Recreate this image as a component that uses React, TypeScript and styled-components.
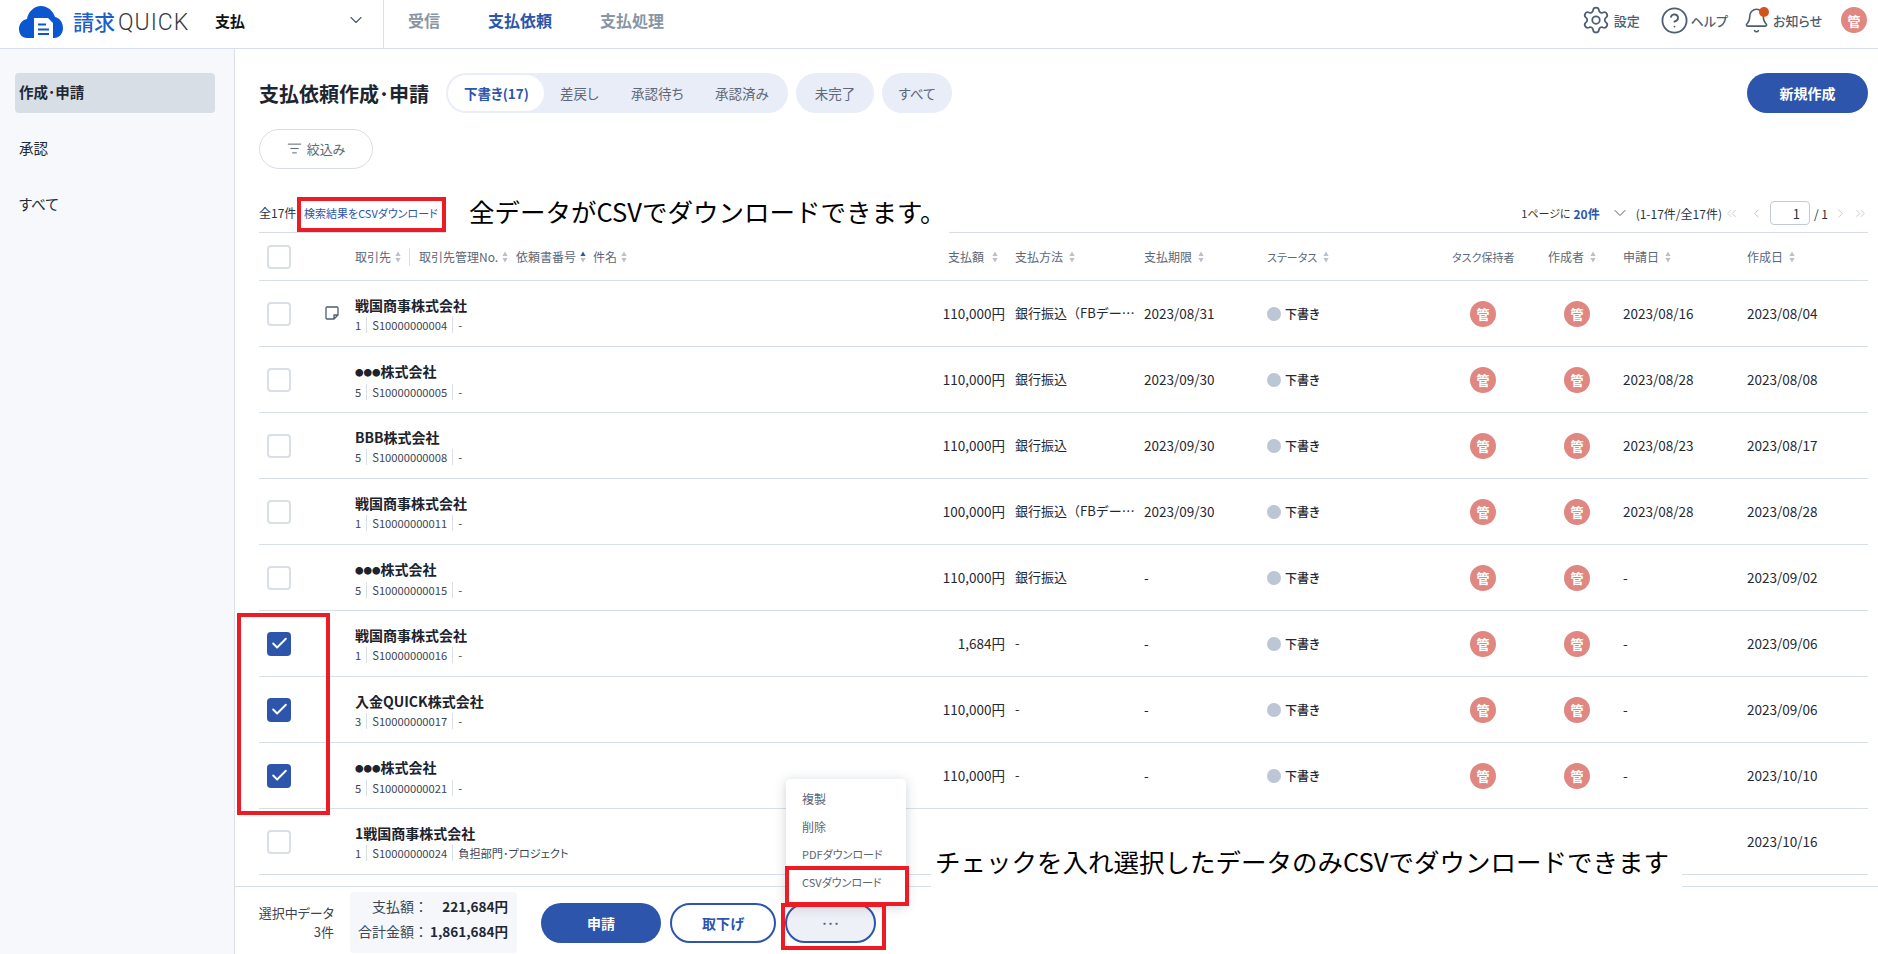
import React from "react";
import styled, { createGlobalStyle } from "styled-components";
import { Settings, CircleHelp, Bell, ChevronDown, ChevronLeft, ChevronRight, ChevronsLeft, ChevronsRight, Check, ListFilter } from "lucide-react";

const Global = createGlobalStyle`
  html, body { margin: 0; padding: 0; background: #fff; }
  body {
    font-family: "Noto Sans CJK JP", "Noto Sans", sans-serif;
    font-feature-settings: "palt";
    color: #1f2833;
  }
  * { box-sizing: border-box; }
`;

const BLUE = "#2c55ab";
const GRID = "66px 30px 590px 60px 139px 123px 185px 96px 75px 124px 121px";

const Page = styled.div`
  position: relative;
  width: 1878px;
  height: 954px;
  overflow: hidden;
  display: flex;
  flex-direction: column;
`;

/* ---------- top bar ---------- */
const TopBar = styled.header`
  height: 49px;
  flex: none;
  display: flex;
  align-items: stretch;
  border-bottom: 1px solid #d8dfeb;
`;
const LogoArea = styled.div`
  width: 215px;
  padding: 0 0 4px 19px;
  display: flex;
  align-items: center;
`;
const LogoKanji = styled.span`
  margin: 0 0 2px 10px;
  font-size: 21px;
  font-weight: 500;
  color: #1c5fc8;
  line-height: 1;
`;
const LogoLatin = styled.span`
  margin-left: 3px;
  font-family: Roboto, sans-serif;
  font-weight: 300;
  font-size: 23px;
  letter-spacing: 1px;
  color: #333a42;
  line-height: 1;
`;
const Selector = styled.div`
  width: 169px;
  padding: 0 17px 8px 0;
  display: flex;
  align-items: center;
  justify-content: space-between;
  font-size: 15px;
  font-weight: 700;
  color: #111;
  border-right: 1px solid #d8dfeb;
`;
const TopNav = styled.nav`
  display: flex;
  align-items: center;
  gap: 48px;
  padding: 0 0 8px 24px;
  flex: 1;
`;
const TopNavItem = styled.span<{ $active?: boolean }>`
  font-size: 16px;
  font-weight: 700;
  color: ${(p) => (p.$active ? BLUE : "#8a95a3")};
`;
const TopActions = styled.div`
  display: flex;
  align-items: center;
  padding: 0 11px 8px 0;
`;
const TopAction = styled.div<{ $gap: number; $icon: number }>`
  display: flex;
  align-items: center;
  gap: ${(p) => p.$icon}px;
  margin-right: ${(p) => p.$gap}px;
  font-size: 13px;
  font-weight: 500;
  color: #4e5d70;
`;
const BellWrap = styled.span`
  position: relative;
  display: flex;
`;
const BellDot = styled.span`
  position: absolute;
  top: 0;
  right: 1px;
  width: 10px;
  height: 10px;
  border-radius: 50%;
  background: #d4531b;
`;
const Avatar = styled.span`
  width: 26px;
  height: 26px;
  border-radius: 50%;
  background: #df8780;
  color: #fff;
  font-size: 13px;
  font-weight: 700;
  display: inline-flex;
  align-items: center;
  justify-content: center;
`;

/* ---------- body ---------- */
const Body = styled.div`
  flex: 1;
  display: flex;
  min-height: 0;
`;
const Sidebar = styled.aside`
  width: 235px;
  flex: none;
  background: #f6f8fc;
  border-right: 1px solid #d8dfeb;
  padding: 24px 19px 0 15px;
  display: flex;
  flex-direction: column;
  gap: 16px;
`;
const SideItem = styled.div<{ $active?: boolean }>`
  height: 40px;
  padding: 0 0 3px 4px;
  display: flex;
  align-items: center;
  font-size: 14.5px;
  font-weight: ${(p) => (p.$active ? 700 : 400)};
  border-radius: 4px;
  background: ${(p) => (p.$active ? "#d8dee6" : "transparent")};
`;
const Main = styled.main`
  flex: 1;
  display: flex;
  flex-direction: column;
  min-width: 0;
`;
const Content = styled.div`
  flex: 1;
  padding: 24px 10px 0 24px;
  min-height: 0;
`;
const HeadRow = styled.div`
  display: flex;
  align-items: center;
  height: 40px;
`;
const Title = styled.h1`
  margin: 0 16px 0 0;
  width: 171px;
  font-size: 20px;
  font-weight: 700;
  white-space: nowrap;
  color: #1c2530;
`;
const TabGroup = styled.div`
  display: flex;
  align-items: center;
  height: 40px;
  padding: 2px 0 2px 2px;
  border-radius: 20px;
  background: #e9edf7;
`;
const Tab = styled.div<{ $active?: boolean; $w: number }>`
  width: ${(p) => p.$w}px;
  height: 36px;
  display: flex;
  align-items: center;
  padding-left: 16px;
  border-radius: 18px;
  font-size: 13.5px;
  font-weight: ${(p) => (p.$active ? 700 : 400)};
  color: ${(p) => (p.$active ? BLUE : "#5d6878")};
  background: ${(p) => (p.$active ? "#fff" : "transparent")};
  white-space: nowrap;
`;
const PillTab = styled.div<{ $w: number }>`
  width: ${(p) => p.$w}px;
  height: 40px;
  margin-left: 8px;
  border-radius: 20px;
  background: #e9edf7;
  color: #5d6878;
  font-size: 13.5px;
  display: flex;
  align-items: center;
  justify-content: center;
`;
const PrimaryButton = styled.button<{ $w: number }>`
  width: ${(p) => p.$w}px;
  height: 40px;
  border: none;
  border-radius: 20px;
  background: ${BLUE};
  color: #fff;
  font: inherit;
  font-size: 14px;
  font-weight: 700;
`;
const Spacer = styled.div`
  flex: 1;
`;
const FilterButton = styled.button`
  margin-top: 16px;
  width: 114px;
  height: 40px;
  padding: 0 0 2px;
  border: 1px solid #d8dde6;
  border-radius: 20px;
  background: #fff;
  color: #5d6878;
  font: inherit;
  font-size: 13px;
  display: flex;
  align-items: center;
  justify-content: center;
  gap: 5px;
`;
const Toolbar = styled.div`
  height: 64px;
  padding-top: 32px;
  border-bottom: 1px solid #d9dee6;
  display: flex;
  align-items: flex-start;
  font-size: 12px;
`;
const Count = styled.span`
  width: 45px;
  line-height: 24px;
  color: #2b3440;
`;
const DownloadLink = styled.span`
  line-height: 24px;
  font-size: 11px;
  color: ${BLUE};
`;
const Pager = styled.div`
  display: flex;
  align-items: center;
  height: 24px;
  color: #2b3440;
`;
const PerPageLabel = styled.span`
  font-size: 11px;
`;
const PerPageValue = styled.span`
  margin-left: 3px;
  font-weight: 700;
  color: ${BLUE};
`;
const PagerGap = styled.span<{ $w: number }>`
  display: inline-flex;
  margin-left: ${(p) => p.$w}px;
  color: inherit;
`;
const PageInput = styled.span`
  width: 40px;
  height: 24px;
  margin-left: 6px;
  padding-right: 9px;
  border: 1px solid #c3cad6;
  border-radius: 4px;
  display: flex;
  align-items: center;
  justify-content: flex-end;
  font-size: 13px;
`;

/* ---------- table ---------- */
const Row = styled.div<{ $h: number }>`
  height: ${(p) => p.$h}px;
  display: grid;
  grid-template-columns: ${GRID};
  align-items: center;
  border-bottom: 1px solid #d9dfe8;
  font-size: 13.5px;
`;
const CheckCell = styled.div`
  padding-left: 8px;
  display: flex;
`;
const Box = styled.span<{ $on?: boolean }>`
  width: 24px;
  height: 24px;
  border-radius: 4px;
  border: 2px solid ${(p) => (p.$on ? BLUE : "#dadfe7")};
  background: ${(p) => (p.$on ? BLUE : "#fff")};
  color: #fff;
  display: inline-flex;
  align-items: center;
  justify-content: center;
`;
const HeadNames = styled.div`
  display: flex;
  align-items: center;
`;
const HeadLabel = styled.span<{ $w?: number; $sep?: boolean; $pl?: number; $gap?: number; $size?: number }>`
  width: ${(p) => (p.$w ? `${p.$w}px` : "auto")};
  padding-left: ${(p) => p.$pl ?? 0}px;
  height: 18px;
  display: inline-flex;
  align-items: center;
  gap: ${(p) => p.$gap ?? 6}px;
  font-size: ${(p) => p.$size ?? 12}px;
  color: #5c6878;
  white-space: nowrap;
  border-right: ${(p) => (p.$sep ? "1px solid #d9dfe8" : "none")};
`;
const NameBlock = styled.div`
  display: flex;
  flex-direction: column;
  gap: 2px;
  padding-top: 1px;
`;
const CompanyName = styled.div`
  font-size: 14px;
  font-weight: 700;
  line-height: 20px;
  color: #1b232d;
`;
const NameDots = styled.span`
  font-size: 8.5px;
  vertical-align: 1px;
`;
const SubLine = styled.div`
  display: flex;
  align-items: center;
  height: 16px;
  font-size: 11.2px;
  color: #3c4653;
`;
const SubPart = styled.span<{ $sep?: boolean }>`
  height: 16px;
  line-height: 16px;
  padding: 0 5px;
  border-right: ${(p) => (p.$sep ? "1px solid #d9dfe8" : "none")};
  &:first-child { padding-left: 0; }
`;
const Amount = styled.div`
  display: flex;
  justify-content: flex-end;
  padding-bottom: 2px;
  white-space: nowrap;
`;
const Method = styled.div`
  padding: 0 9px 2px 10px;
  font-size: 13px;
  white-space: nowrap;
  overflow: hidden;
  text-overflow: ellipsis;
  font-feature-settings: normal;
`;
const DateCell = styled.div`
  padding-bottom: 2px;
`;
const Status = styled.div`
  display: flex;
  align-items: center;
  gap: 4px;
  font-size: 12px;
  font-weight: 500;
`;
const Dot = styled.span`
  width: 14px;
  height: 14px;
  border-radius: 50%;
  background: #bdc6d4;
`;
const AvatarCell = styled.div<{ $pl: number }>`
  padding-left: ${(p) => p.$pl}px;
  display: flex;
`;

/* ---------- footer ---------- */
const Footer = styled.footer`
  height: 68px;
  flex: none;
  padding: 5px 0 0 23px;
  border-top: 1px solid #d9dfe8;
  display: flex;
  align-items: flex-start;
`;
const SelectedLabel = styled.div`
  width: 76px;
  margin-top: 11px;
  text-align: right;
  font-size: 13px;
  line-height: 19px;
  color: #3c4653;
  white-space: nowrap;
`;
const Summary = styled.div`
  width: 167px;
  height: 61px;
  margin: 0 24px 0 16px;
  padding: 1px 9px 0 0;
  border-radius: 4px;
  background: #f5f7fb;
  display: grid;
  grid-template-columns: 78px 80px;
  grid-auto-rows: 25px;
  align-items: center;
  font-size: 13.5px;
`;
const SummaryKey = styled.span`
  text-align: right;
  color: #3c4653;
  white-space: nowrap;
  font-size: 14px;
  font-feature-settings: normal;
`;
const SummaryValue = styled.span`
  text-align: right;
  font-weight: 700;
  white-space: nowrap;
`;
const ButtonRow = styled.div`
  display: flex;
  gap: 9px;
  margin-top: 11px;
`;
const OutlineButton = styled.button<{ $w: number; $tinted?: boolean }>`
  width: ${(p) => p.$w}px;
  height: 40px;
  padding: 0;
  border: 2px solid ${BLUE};
  border-radius: 20px;
  background: ${(p) => (p.$tinted ? "#edf0f6" : "#fff")};
  color: ${(p) => (p.$tinted ? "#5d6878" : BLUE)};
  font: inherit;
  font-size: ${(p) => (p.$tinted ? 12 : 14)}px;
  font-weight: 700;
`;

/* ---------- overlays: dropdown and the annotations on the screenshot ---------- */
const Menu = styled.div`
  position: absolute;
  left: 786px;
  top: 779px;
  width: 120px;
  height: 126px;
  padding-top: 5px;
  border-radius: 4px;
  background: #fff;
  box-shadow: 0 2px 12px rgba(60, 75, 100, 0.25);
  z-index: 3;
`;
const MenuItem = styled.div<{ $size?: number }>`
  height: 28px;
  padding-left: 16px;
  display: flex;
  align-items: center;
  font-size: ${(p) => p.$size ?? 12}px;
  color: #5a6472;
`;
const Note = styled.div<{ $x: number; $y: number; $w: number; $h: number; $pl: number; $pb: number }>`
  position: absolute;
  left: ${(p) => p.$x}px;
  top: ${(p) => p.$y}px;
  width: ${(p) => p.$w}px;
  height: ${(p) => p.$h}px;
  padding: 0 0 ${(p) => p.$pb}px ${(p) => p.$pl}px;
  background: #fff;
  display: flex;
  align-items: center;
  font-size: 25.5px;
  font-feature-settings: normal;
  color: #000;
  white-space: nowrap;
  z-index: 2;
`;
const RedBox = styled.div<{ $x: number; $y: number; $w: number; $h: number }>`
  position: absolute;
  left: ${(p) => p.$x}px;
  top: ${(p) => p.$y}px;
  width: ${(p) => p.$w}px;
  height: ${(p) => p.$h}px;
  border: 4px solid #ed1c24;
  z-index: 4;
`;

/* ---------- drawings ---------- */
const LogoMark = () => (
  <svg width="44" height="32" viewBox="0 0 44 32" aria-hidden="true">
    <path d="M8 32C3 32 0 28 0 23C0 18 3 14 8 13C9 6 15 0 22 0C29 0 34 5 36 11C41 12 44 17 44 22C44 28 40 32 35 32Z" fill="#0b57cf" />
    <path d="M15 12H29L34 17V32H15Z" fill="#fff" />
    <rect x="19" y="17.5" width="8" height="2" fill="#0b57cf" />
    <rect x="19" y="22.5" width="11" height="2" fill="#0b57cf" />
    <rect x="19" y="27" width="11" height="2" fill="#0b57cf" />
  </svg>
);
const Sort = ({ active }: { active?: boolean }) => (
  <svg width="6" height="12" viewBox="0 0 6 12" aria-hidden="true">
    <path d="M3 0.5L5.6 5H0.4Z" fill={active ? BLUE : "#b8c0cc"} />
    <path d="M3 11.5L5.6 7H0.4Z" fill="#b8c0cc" />
  </svg>
);
const NoteIcon = () => (
  <svg width="14" height="14" viewBox="0 0 14 14" aria-hidden="true">
    <path d="M2 1H12Q13 1 13 2V9L9 13H2Q1 13 1 12V2Q1 1 2 1ZM13 9H9V13" fill="none" stroke="#4e5d70" strokeWidth="1.3" strokeLinejoin="round" />
  </svg>
);

type RowData = {
  name: string; no: string; code: string; sub: string; amount: string; method: string;
  due: string; applied: string; created: string; checked?: boolean; note?: boolean;
};
const FB = "銀行振込（FBデータ）";
const rows: RowData[] = [
  { name: "戦国商事株式会社", no: "1", code: "S10000000004", sub: "-", amount: "110,000円", method: FB, due: "2023/08/31", applied: "2023/08/16", created: "2023/08/04", note: true },
  { name: "●●●株式会社", no: "5", code: "S10000000005", sub: "-", amount: "110,000円", method: "銀行振込", due: "2023/09/30", applied: "2023/08/28", created: "2023/08/08" },
  { name: "BBB株式会社", no: "5", code: "S10000000008", sub: "-", amount: "110,000円", method: "銀行振込", due: "2023/09/30", applied: "2023/08/23", created: "2023/08/17" },
  { name: "戦国商事株式会社", no: "1", code: "S10000000011", sub: "-", amount: "100,000円", method: FB, due: "2023/09/30", applied: "2023/08/28", created: "2023/08/28" },
  { name: "●●●株式会社", no: "5", code: "S10000000015", sub: "-", amount: "110,000円", method: "銀行振込", due: "-", applied: "-", created: "2023/09/02" },
  { name: "戦国商事株式会社", no: "1", code: "S10000000016", sub: "-", amount: "1,684円", method: "-", due: "-", applied: "-", created: "2023/09/06", checked: true },
  { name: "入金QUICK株式会社", no: "3", code: "S10000000017", sub: "-", amount: "110,000円", method: "-", due: "-", applied: "-", created: "2023/09/06", checked: true },
  { name: "●●●株式会社", no: "5", code: "S10000000021", sub: "-", amount: "110,000円", method: "-", due: "-", applied: "-", created: "2023/10/10", checked: true },
  { name: "1戦国商事株式会社", no: "1", code: "S10000000024", sub: "負担部門･プロジェクト", amount: "110,000円", method: "-", due: "-", applied: "-", created: "2023/10/16" },
];

const renderName = (name: string) =>
  name.startsWith("●●●") ? (
    <>
      <NameDots>●●●</NameDots>
      {name.slice(3)}
    </>
  ) : (
    name
  );

export default function App() {
  return (
    <Page>
      <Global />
      <TopBar>
        <LogoArea>
          <LogoMark />
          <LogoKanji>請求</LogoKanji>
          <LogoLatin>QUICK</LogoLatin>
        </LogoArea>
        <Selector>
          支払
          <ChevronDown size={20} strokeWidth={1.4} color="#4e5d70" />
        </Selector>
        <TopNav>
          <TopNavItem>受信</TopNavItem>
          <TopNavItem $active>支払依頼</TopNavItem>
          <TopNavItem>支払処理</TopNavItem>
        </TopNav>
        <TopActions>
          <TopAction $gap={20} $icon={3}>
            <Settings size={30} strokeWidth={1.4} />
            設定
          </TopAction>
          <TopAction $gap={15} $icon={2}>
            <CircleHelp size={29} strokeWidth={1.5} />
            ヘルプ
          </TopAction>
          <TopAction $gap={19} $icon={3}>
            <BellWrap>
              <Bell size={27} strokeWidth={1.4} />
              <BellDot />
            </BellWrap>
            お知らせ
          </TopAction>
          <Avatar>管</Avatar>
        </TopActions>
      </TopBar>
      <Body>
        <Sidebar>
          <SideItem $active>作成･申請</SideItem>
          <SideItem>承認</SideItem>
          <SideItem>すべて</SideItem>
        </Sidebar>
        <Main>
          <Content>
            <HeadRow>
              <Title>支払依頼作成･申請</Title>
              <TabGroup>
                <Tab $active $w={96}>下書き(17)</Tab>
                <Tab $w={71}>差戻し</Tab>
                <Tab $w={84}>承認待ち</Tab>
                <Tab $w={89}>承認済み</Tab>
              </TabGroup>
              <PillTab $w={78}>未完了</PillTab>
              <PillTab $w={70}>すべて</PillTab>
              <Spacer />
              <PrimaryButton $w={121}>新規作成</PrimaryButton>
            </HeadRow>
            <FilterButton>
              <ListFilter size={15} strokeWidth={1.6} />
              絞込み
            </FilterButton>
            <Toolbar>
              <Count>全17件</Count>
              <DownloadLink>検索結果をCSVダウンロード</DownloadLink>
              <Spacer />
              <Pager>
                <PerPageLabel>1ページに</PerPageLabel>
                <PerPageValue>20件</PerPageValue>
                <PagerGap $w={10}><ChevronDown size={20} strokeWidth={1.2} color="#4e5d70" /></PagerGap>
                <PagerGap $w={6}>(1-17件/全17件)</PagerGap>
                <PagerGap $w={2}><ChevronsLeft size={15} strokeWidth={1.3} color="#b8c0cc" /></PagerGap>
                <PagerGap $w={10}><ChevronLeft size={15} strokeWidth={1.3} color="#b8c0cc" /></PagerGap>
                <PageInput>1</PageInput>
                <PagerGap $w={4}>/ 1</PagerGap>
                <PagerGap $w={5}><ChevronRight size={15} strokeWidth={1.3} color="#b8c0cc" /></PagerGap>
                <PagerGap $w={5}><ChevronsRight size={15} strokeWidth={1.3} color="#b8c0cc" /></PagerGap>
              </Pager>
            </Toolbar>
            <Row $h={48}>
              <CheckCell><Box /></CheckCell>
              <div />
              <HeadNames>
                <HeadLabel $w={55} $sep $gap={4}>取引先<Sort /></HeadLabel>
                <HeadLabel $w={106} $pl={9} $gap={4}>取引先管理No.<Sort /></HeadLabel>
                <HeadLabel $w={77} $gap={4}>依頼書番号<Sort active /></HeadLabel>
                <HeadLabel $gap={4}>件名<Sort /></HeadLabel>
              </HeadNames>
              <HeadLabel $pl={3} $gap={8}>支払額<Sort /></HeadLabel>
              <HeadLabel $pl={10}>支払方法<Sort /></HeadLabel>
              <HeadLabel>支払期限<Sort /></HeadLabel>
              <HeadLabel $size={11}>ステータス<Sort /></HeadLabel>
              <HeadLabel $size={11}>タスク保持者</HeadLabel>
              <HeadLabel>作成者<Sort /></HeadLabel>
              <HeadLabel>申請日<Sort /></HeadLabel>
              <HeadLabel>作成日<Sort /></HeadLabel>
            </Row>
            {rows.map((r) => (
              <Row $h={66} key={r.code}>
                <CheckCell>
                  <Box $on={r.checked}>{r.checked && <Check size={19} strokeWidth={2.4} />}</Box>
                </CheckCell>
                <div>{r.note && <NoteIcon />}</div>
                <NameBlock>
                  <CompanyName>{renderName(r.name)}</CompanyName>
                  <SubLine>
                    <SubPart $sep>{r.no}</SubPart>
                    <SubPart $sep>{r.code}</SubPart>
                    <SubPart>{r.sub}</SubPart>
                  </SubLine>
                </NameBlock>
                <Amount>{r.amount}</Amount>
                <Method>{r.method}</Method>
                <DateCell>{r.due}</DateCell>
                <Status><Dot />下書き</Status>
                <AvatarCell $pl={18}><Avatar>管</Avatar></AvatarCell>
                <AvatarCell $pl={16}><Avatar>管</Avatar></AvatarCell>
                <DateCell>{r.applied}</DateCell>
                <DateCell>{r.created}</DateCell>
              </Row>
            ))}
          </Content>
          <Footer>
            <SelectedLabel>選択中データ<br />3件</SelectedLabel>
            <Summary>
              <SummaryKey>支払額：</SummaryKey><SummaryValue>221,684円</SummaryValue>
              <SummaryKey>合計金額：</SummaryKey><SummaryValue>1,861,684円</SummaryValue>
            </Summary>
            <ButtonRow>
              <PrimaryButton $w={120}>申請</PrimaryButton>
              <OutlineButton $w={106}>取下げ</OutlineButton>
              <OutlineButton $w={91} $tinted>･･･</OutlineButton>
            </ButtonRow>
          </Footer>
        </Main>
      </Body>

      <Note $x={446} $y={191} $w={503} $h={43} $pl={23} $pb={5}>全データがCSVでダウンロードできます。</Note>
      <Note $x={931} $y={828} $w={751} $h={64} $pl={4} $pb={0}>チェックを入れ選択したデータのみCSVでダウンロードできます</Note>
      <Menu>
        <MenuItem>複製</MenuItem>
        <MenuItem>削除</MenuItem>
        <MenuItem $size={11}>PDFダウンロード</MenuItem>
        <MenuItem $size={11}>CSVダウンロード</MenuItem>
      </Menu>
      <RedBox $x={297} $y={197} $w={149} $h={35} />
      <RedBox $x={237} $y={613} $w={93} $h={202} />
      <RedBox $x={785} $y={866} $w={124} $h={40} />
      <RedBox $x={781} $y={903} $w={105} $h={47} />
    </Page>
  );
}
